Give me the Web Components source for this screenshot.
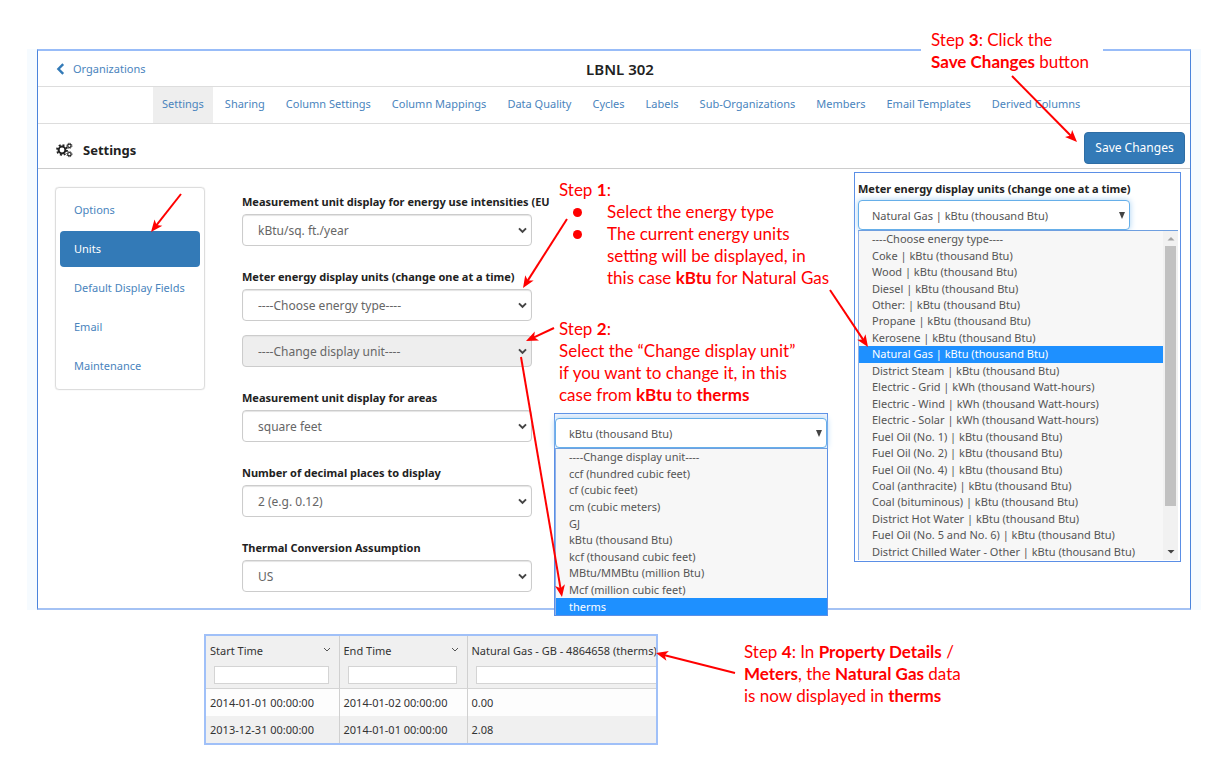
<!DOCTYPE html>
<html lang="en">
<head>
<meta charset="utf-8">
<title>LBNL 302 – Settings</title>
<style>
  body { margin: 0; background: #fff; font-family: "Noto Sans", sans-serif; font-size: 11px; color: #222; }
</style>
</head>
<body>
<guide-page></guide-page>
<script>
const define = (name, html, setup) => {
  const template = document.createElement('template');
  template.innerHTML = html;
  customElements.define(name, class extends HTMLElement {
    constructor() {
      super();
      this.attachShadow({ mode: 'open' }).append(template.content.cloneNode(true));
    }
    connectedCallback() {
      if (setup && !this.ready) { this.ready = true; setup(this, this.shadowRoot); }
    }
  });
};

/* Top bar with the back link and the organization's name */
define('org-header', `
  <style>
    :host { display: grid; grid-template-columns: 1fr auto 1fr; align-items: center; height: 35px; padding: 0 18px; border-bottom: 1px solid #ddd; }
    a { display: flex; align-items: center; gap: 8px; color: #4a84bd; text-decoration: none; }
    h1 { margin: 0; padding-left: 12px; font-size: 15px; line-height: 20px; font-weight: 600; }
  </style>
  <a href="#organizations"><svg width="9" height="12" viewBox="0 0 9 12"><path d="M7.2 1.2 2.4 6l4.8 4.8" fill="none" stroke="#337ab7" stroke-width="2.4"/></svg>Organizations</a>
  <h1><slot></slot></h1>`);

define('org-tabs', `
  <style>
    :host { display: block; height: 36px; border-bottom: 1px solid #ddd; }
    nav { display: flex; gap: 3px; height: 100%; padding-left: 115px; }
    a { padding: 0 9px; line-height: 34px; color: #4a84bd; text-decoration: none; white-space: nowrap; }
    a[aria-current] { background: #eee; }
  </style>
  <nav></nav>`, (host, root) => {
  const nav = root.querySelector('nav');
  ['Settings', 'Sharing', 'Column Settings', 'Column Mappings', 'Data Quality', 'Cycles', 'Labels',
   'Sub-Organizations', 'Members', 'Email Templates', 'Derived Columns'].forEach((label, i) => {
    const a = document.createElement('a');
    a.href = '#' + label.toLowerCase().replace(' ', '-');
    a.textContent = label;
    if (i === 0) a.setAttribute('aria-current', 'page');
    nav.append(a);
  });
});

define('title-bar', `
  <style>
    :host { display: flex; align-items: center; height: 44px; padding: 0 5px 0 18px; border-bottom: 1px solid #ccc; }
    h2 { flex: 1; margin: 0; padding: 8px 0 0 10px; font-size: 13px; line-height: 20px; font-weight: 700; }
    svg { padding-top: 8px; }
    button { width: 101px; height: 32px; margin-top: 3px; padding: 0; border: 1px solid #2e6da4; border-radius: 4px; background: #337ab7; color: #fff; font: inherit; font-size: 12px; white-space: nowrap; }
  </style>
  <svg width="17" height="16" viewBox="0 0 17 16" fill="none" stroke="#222">
    <circle cx="6" cy="8" r="3.4" stroke-width="2"/>
    <circle cx="6" cy="8" r="5" stroke-width="1.8" stroke-dasharray="1.96 1.96"/>
    <circle cx="13.4" cy="3.8" r="1.7" stroke-width="1.2"/>
    <circle cx="13.4" cy="3.8" r="2.6" stroke-width="1" stroke-dasharray="1.02 1.02"/>
    <circle cx="13.4" cy="12.2" r="1.7" stroke-width="1.2"/>
    <circle cx="13.4" cy="12.2" r="2.6" stroke-width="1" stroke-dasharray="1.02 1.02"/>
  </svg>
  <h2><slot></slot></h2>
  <button type="button">Save Changes</button>`);

define('side-nav', `
  <style>
    :host { display: block; box-sizing: border-box; width: 150px; padding: 4px 4px 5px; border: 1px solid #ddd; border-radius: 4px; box-shadow: 0 0 1px #ccc; }
    nav { display: grid; gap: 3px; }
    a { padding: 0 14px; border-radius: 4px; line-height: 36px; color: #4a84bd; text-decoration: none; white-space: nowrap; }
    a[aria-current] { background: #337ab7; color: #fff; }
  </style>
  <nav>
    <a href="#options">Options</a>
    <a href="#units" aria-current="page">Units</a>
    <a href="#default-display-fields">Default Display Fields</a>
    <a href="#email">Email</a>
    <a href="#maintenance">Maintenance</a>
  </nav>`);

/* Labelled drop-down */
define('unit-field', `
  <style>
    :host { display: block; }
    label { display: block; line-height: 24px; font-weight: 700; white-space: nowrap; }
    label[hidden] { display: none; }
    .box { display: grid; align-items: center; width: 290px; }
    select, svg { grid-area: 1 / 1; }
    select { appearance: none; height: 32px; margin: 0; padding: 0 30px 0 15px; border: 1px solid #ccc; border-radius: 4px; background: #fff; box-shadow: inset 0 1px 1px #e4e4e4; color: #666; font: inherit; font-size: 12px; opacity: 1; }
    select:disabled { background: #eee; }
    svg { justify-self: end; margin-right: 5px; pointer-events: none; }
  </style>
  <label for="s"></label>
  <div class="box"><select id="s"><option></option></select>
    <svg width="9" height="7" viewBox="0 0 9 7"><path d="M1 1.4 4.5 4.9 8 1.4" fill="none" stroke="#444" stroke-width="2"/></svg></div>`,
  (host, root) => {
    const label = root.querySelector('label'), select = root.querySelector('select');
    label.textContent = host.getAttribute('label') || '';
    label.hidden = !label.textContent;
    if (label.hidden) select.setAttribute('aria-label', 'Display unit');
    root.querySelector('option').textContent = host.getAttribute('value');
    select.disabled = host.hasAttribute('disabled');
  });

/* Focused drop-down with its list of options unfolded */
define('open-select', `
  <style>
    :host { display: block; box-sizing: border-box; border: 1px solid #5b8fe6; background: #fff; }
    label { display: block; padding: 5px 0 0 3px; line-height: 22px; font-weight: 700; white-space: nowrap; }
    label:empty { height: 4px; padding: 0; background: #f0f5fd; }
    .head { display: grid; align-items: center; width: var(--head-width, auto); margin-left: var(--inset, 0); }
    select, .head svg { grid-area: 1 / 1; }
    select { appearance: none; height: 30px; margin: 0; padding: 0 24px 0 13px; border: 1px solid #66afe9; border-radius: 4px; background: #fff; box-shadow: 0 0 6px #a8d2f3; color: #555; font: inherit; }
    .head svg { justify-self: end; margin-right: 5px; }
    .menu { display: flex; position: relative; margin: 0 var(--end, 0) 0 var(--inset, 0); border-top: 1px solid #6f9fe0; border-left: 1px solid #8fb1e8; background: #f7f7f7; }
    ul { flex: 1; display: grid; grid-auto-rows: 1fr; height: var(--list-height); margin: 0; padding: 0; list-style: none; }
    li { display: flex; align-items: center; padding-left: 13px; line-height: 16px; color: #555; white-space: nowrap; }
    li[aria-selected=true] { background: #1e90ff; color: #fff; }
    .bar { display: none; }
    :host([scroll]) .bar { display: flex; flex-direction: column; align-items: center; width: 15px; background: #f1f1f1; }
    .thumb { flex: 1; align-self: stretch; margin: 0 2px 38px; background: #c1c1c1; }
    .bar svg { flex: none; }
  </style>
  <label for="s"></label>
  <div class="head"><select id="s"><option></option></select>
    <svg width="6" height="7" viewBox="0 0 6 7"><path d="M0 0h6L3 7z" fill="#444"/></svg></div>
  <div class="menu"><ul role="listbox"></ul>
    <div class="bar">
      <svg width="15" height="15" viewBox="0 0 15 15"><path d="M4.5 9.5h7L8 6z" fill="#a3a3a3"/></svg>
      <div class="thumb"></div>
      <svg width="15" height="16" viewBox="0 0 15 16"><path d="M4.5 6h7L8 9.5z" fill="#444"/></svg>
    </div></div>`, (host, root) => {
  root.querySelector('label').textContent = host.getAttribute('label') || '';
  if (!host.getAttribute('label')) root.querySelector('select').setAttribute('aria-label', 'Display unit');
  root.querySelector('option').textContent = host.getAttribute('value');
  const ul = root.querySelector('ul');
  ul.setAttribute('aria-label', 'Choices');
  host.getAttribute('options').split(';').forEach(text => {
    const li = document.createElement('li');
    li.setAttribute('role', 'option');
    li.setAttribute('aria-selected', text === host.getAttribute('active'));
    li.textContent = text;
    ul.append(li);
  });
});

define('meter-table', `
  <style>
    :host { display: block; box-sizing: border-box; width: 454px; border: 2px solid #a0c0f8; overflow: hidden; }
    table { width: 100%; table-layout: fixed; border-collapse: collapse; color: #333; }
    th, td { padding: 0 4px; border-right: 1px solid #d0d0d0; text-align: left; font-weight: 400; white-space: nowrap; }
    th { height: 52px; padding: 0; background: #f0f0f0; border-bottom: 1px solid #d4d4d4; }
    th:last-child, td:last-child { border-right: 0; }
    td { height: 27px; background: #fdfdfd; }
    tr:last-child td { background: #f0f0f0; }
    .name { display: flex; align-items: center; justify-content: space-between; height: 28px; padding: 0 8px 0 4px; }
    input { display: block; box-sizing: border-box; width: calc(100% - 18px); height: 18px; margin: 2px 9px 4px 8px; border: 1px solid #d4d4d4; background: #fff; }
    th:last-child .name { padding-right: 0; }
    th:last-child input { width: calc(100% - 8px); border-right: 0; margin-right: 0; }
  </style>
  <table>
    <colgroup><col style="width:133px"><col style="width:128px"><col></colgroup>
    <thead><tr>
      <th><div class="name">Start Time <svg width="8" height="6" viewBox="0 0 8 6"><path d="M1 1l3 3 3-3" fill="none" stroke="#555"/></svg></div><input aria-label="Filter start time"></th>
      <th><div class="name">End Time <svg width="8" height="6" viewBox="0 0 8 6"><path d="M1 1l3 3 3-3" fill="none" stroke="#555"/></svg></div><input aria-label="Filter end time"></th>
      <th><div class="name">Natural Gas - GB - 4864658 (therms)</div><input aria-label="Filter natural gas"></th>
    </tr></thead>
    <tbody>
      <tr><td>2014-01-01 00:00:00</td><td>2014-01-02 00:00:00</td><td>0.00</td></tr>
      <tr><td>2013-12-31 00:00:00</td><td>2014-01-01 00:00:00</td><td>2.08</td></tr>
    </tbody>
  </table>`);

/* Red instruction text */
define('step-note', `
  <style>
    :host { display: block; font-family: Lato, sans-serif; font-size: 17px; line-height: 22px; color: #f00; white-space: nowrap; }
  </style>
  <slot></slot>`);

define('note-list', `
  <style>
    :host { display: block; }
    ul { margin: 0; padding: 0; list-style: none; }
    li { display: grid; grid-template-columns: 34px auto; padding-left: 14px; }
    li::before { content: ""; width: 9px; height: 9px; margin-top: 7px; border-radius: 50%; background: #f00; }
  </style>
  <ul>
    <li>Select the energy type</li>
    <li><span>The current energy units<br>setting will be displayed, in<br>this case <b>kBtu</b> for Natural Gas</span></li>
  </ul>`);

/* Arrows that tie the notes to the controls; each is x1 y1 x2 y2, tip last */
define('arrow-layer', `
  <style>
    :host { display: block; pointer-events: none; }
    svg { display: block; overflow: visible; }
  </style>
  <svg width="1" height="1" fill="#f00" stroke="#f00" aria-hidden="true"></svg>`, (host, root) => {
  const arrows = [
    [181, 194, 151, 232], [567, 219, 523, 288], [554, 328, 526, 341], [521, 357, 562, 597],
    [830, 290, 868, 347], [1012, 76, 1077, 142], [735, 673, 656, 653]
  ];
  root.querySelector('svg').innerHTML = arrows.map(([x1, y1, x2, y2]) => {
    const angle = Math.atan2(y2 - y1, x2 - x1) * 180 / Math.PI;
    const length = Math.hypot(x2 - x1, y2 - y1);
    return `<g transform="translate(${x1} ${y1}) rotate(${angle})">
      <path d="M0 0H${length - 7}" stroke-width="2"/>
      <path d="M${length} 0l-12-5 3 5-3 5z" stroke="none"/></g>`;
  }).join('');
});

define('guide-page', `
  <style>
    :host { display: block; position: relative; padding: 49px 27px 22px 37px; }
    .panel { border: 1px solid #4a84dc; border-width: 2px 1px; border-top-color: #98bcf8; border-bottom-color: #a4c2f4; background: #fff; box-shadow: -10px 0 #f6fbff, 10px 0 #f6fbff; }
    .body { display: flex; gap: 37px; padding: 18px 17px 16px; }
    side-nav { align-self: start; flex: none; }
    form { display: grid; gap: 19px; padding-top: 3px; }
    .pair { display: grid; gap: 14px; }
    .result { display: flex; gap: 86px; padding: 24px 0 0 167px; }
    meter-table { flex: none; }
    .result step-note { padding-top: 7px; }
    .over { position: absolute; }
    .one { left: 559px; top: 179px; }
    .two { left: 559px; top: 318px; }
    .three { left: 921px; top: 29px; padding: 0 14px 8px 10px; background: #fff; }
    .energy { left: 854px; top: 172px; width: 327px; --inset: 3px; --end: 2px; --head-width: 272px; --list-height: 329px; padding-bottom: 1px; }
    .unit { left: 554px; top: 413px; width: 274px; --list-height: 166px; }
    arrow-layer { left: 0; top: 0; }
  </style>
  <main class="panel">
    <org-header>LBNL 302</org-header>
    <org-tabs></org-tabs>
    <title-bar>Settings</title-bar>
    <div class="body">
      <side-nav></side-nav>
      <form>
        <unit-field label="Measurement unit display for energy use intensities (EU" value="kBtu/sq. ft./year"></unit-field>
        <div class="pair">
          <unit-field label="Meter energy display units (change one at a time)" value="----Choose energy type----"></unit-field>
          <unit-field value="----Change display unit----" disabled></unit-field>
        </div>
        <unit-field label="Measurement unit display for areas" value="square feet"></unit-field>
        <unit-field label="Number of decimal places to display" value="2 (e.g. 0.12)"></unit-field>
        <unit-field label="Thermal Conversion Assumption" value="US"></unit-field>
      </form>
    </div>
  </main>
  <section class="result">
    <meter-table></meter-table>
    <step-note>Step <b>4</b>: In <b>Property Details</b> /<br><b>Meters</b>, the <b>Natural Gas</b> data<br>is now displayed in <b>therms</b></step-note>
  </section>
  <step-note class="over one">Step <b>1</b>:<note-list></note-list></step-note>
  <step-note class="over two">Step <b>2</b>:<br>Select the “Change display unit”<br>if you want to change it, in this<br>case from <b>kBtu</b> to <b>therms</b></step-note>
  <step-note class="over three">Step <b>3</b>: Click the<br><b>Save Changes</b> button</step-note>
  <open-select class="over energy" scroll label="Meter energy display units (change one at a time)"
    value="Natural Gas | kBtu (thousand Btu)" active="Natural Gas | kBtu (thousand Btu)"
    options="----Choose energy type----;Coke | kBtu (thousand Btu);Wood | kBtu (thousand Btu);Diesel | kBtu (thousand Btu);Other: | kBtu (thousand Btu);Propane | kBtu (thousand Btu);Kerosene | kBtu (thousand Btu);Natural Gas | kBtu (thousand Btu);District Steam | kBtu (thousand Btu);Electric - Grid | kWh (thousand Watt-hours);Electric - Wind | kWh (thousand Watt-hours);Electric - Solar | kWh (thousand Watt-hours);Fuel Oil (No. 1) | kBtu (thousand Btu);Fuel Oil (No. 2) | kBtu (thousand Btu);Fuel Oil (No. 4) | kBtu (thousand Btu);Coal (anthracite) | kBtu (thousand Btu);Coal (bituminous) | kBtu (thousand Btu);District Hot Water | kBtu (thousand Btu);Fuel Oil (No. 5 and No. 6) | kBtu (thousand Btu);District Chilled Water - Other | kBtu (thousand Btu)"></open-select>
  <open-select class="over unit" value="kBtu (thousand Btu)" active="therms"
    options="----Change display unit----;ccf (hundred cubic feet);cf (cubic feet);cm (cubic meters);GJ;kBtu (thousand Btu);kcf (thousand cubic feet);MBtu/MMBtu (million Btu);Mcf (million cubic feet);therms"></open-select>
  <arrow-layer class="over"></arrow-layer>`);
</script>
</body>
</html>
